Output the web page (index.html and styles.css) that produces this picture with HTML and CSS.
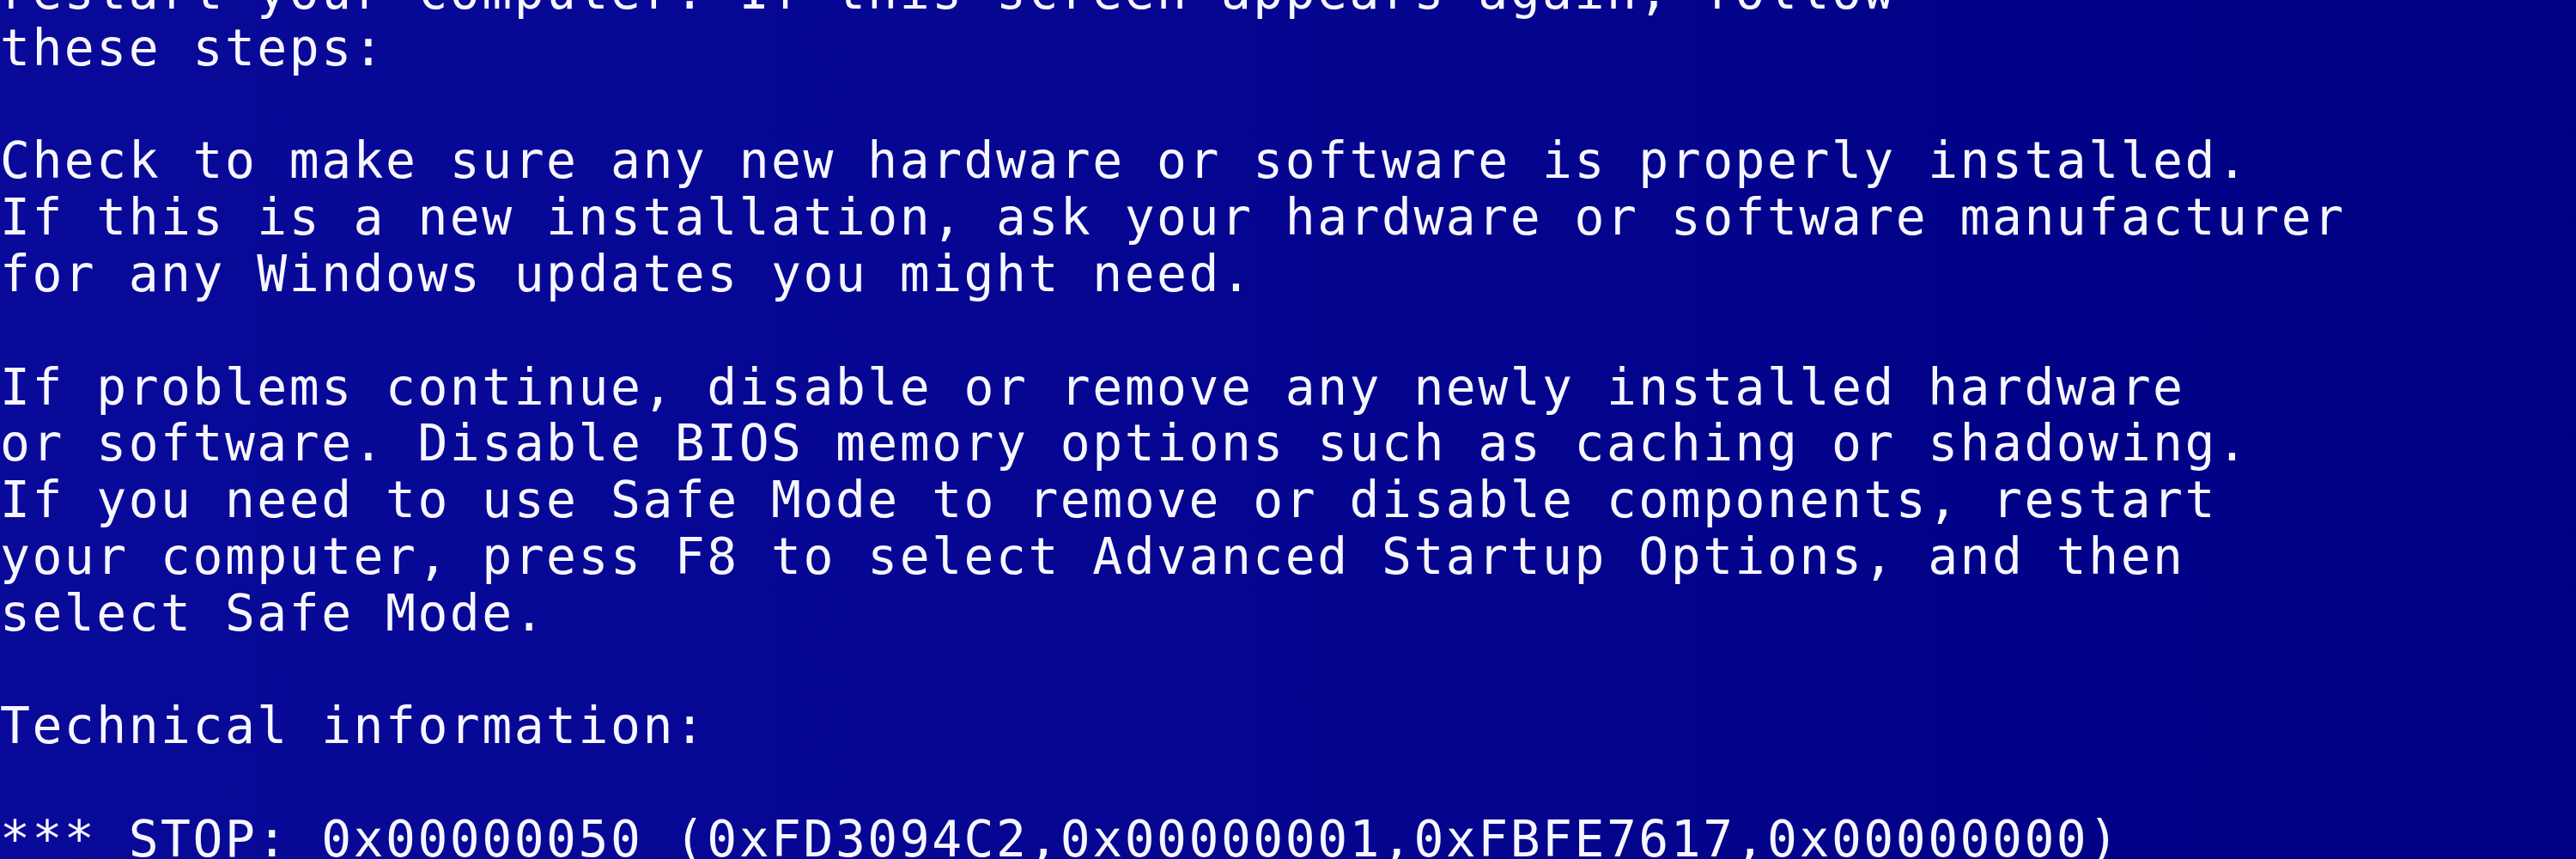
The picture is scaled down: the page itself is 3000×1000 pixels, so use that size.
FILE: index.html
```html
<!DOCTYPE html>
<html>
<head>
<meta charset="utf-8">
<link rel="stylesheet" href="styles.css">
</head>
<body>
<main class="screen">
<p class="line">restart your computer. If this screen appears again, follow</p>
<p class="line">these steps:</p>
<p class="line"> </p>
<p class="line">Check to make sure any new hardware or software is properly installed.</p>
<p class="line">If this is a new installation, ask your hardware or software manufacturer</p>
<p class="line">for any Windows updates you might need.</p>
<p class="line"> </p>
<p class="line">If problems continue, disable or remove any newly installed hardware</p>
<p class="line">or software. Disable BIOS memory options such as caching or shadowing.</p>
<p class="line">If you need to use Safe Mode to remove or disable components, restart</p>
<p class="line">your computer, press F8 to select Advanced Startup Options, and then</p>
<p class="line">select Safe Mode.</p>
<p class="line"> </p>
<p class="line">Technical information:</p>
<p class="line"> </p>
<p class="line">*** STOP: 0x00000050 (0xFD3094C2,0x00000001,0xFBFE7617,0x00000000)</p>
</main>
</body>
</html>
```
FILE: styles.css
```css
html, body {
  margin: 0;
  padding: 0;
  height: 100%;
  overflow: hidden;
}
body {
  background: linear-gradient(90deg, #0a0a9a 0%, #060693 40%, #020289 75%, #000084 100%);
}
.screen {
  display: flex;
  flex-direction: column;
  margin-top: -42px;
  padding-left: 0;
  font-family: "DejaVu Sans Mono", "Liberation Mono", monospace;
  font-size: 58px;
  letter-spacing: 2.5px;
  line-height: 65.8px;
  color: #f6f6ff;
}
.line {
  margin: 0;
  height: 65.8px;
  white-space: pre;
}
```
